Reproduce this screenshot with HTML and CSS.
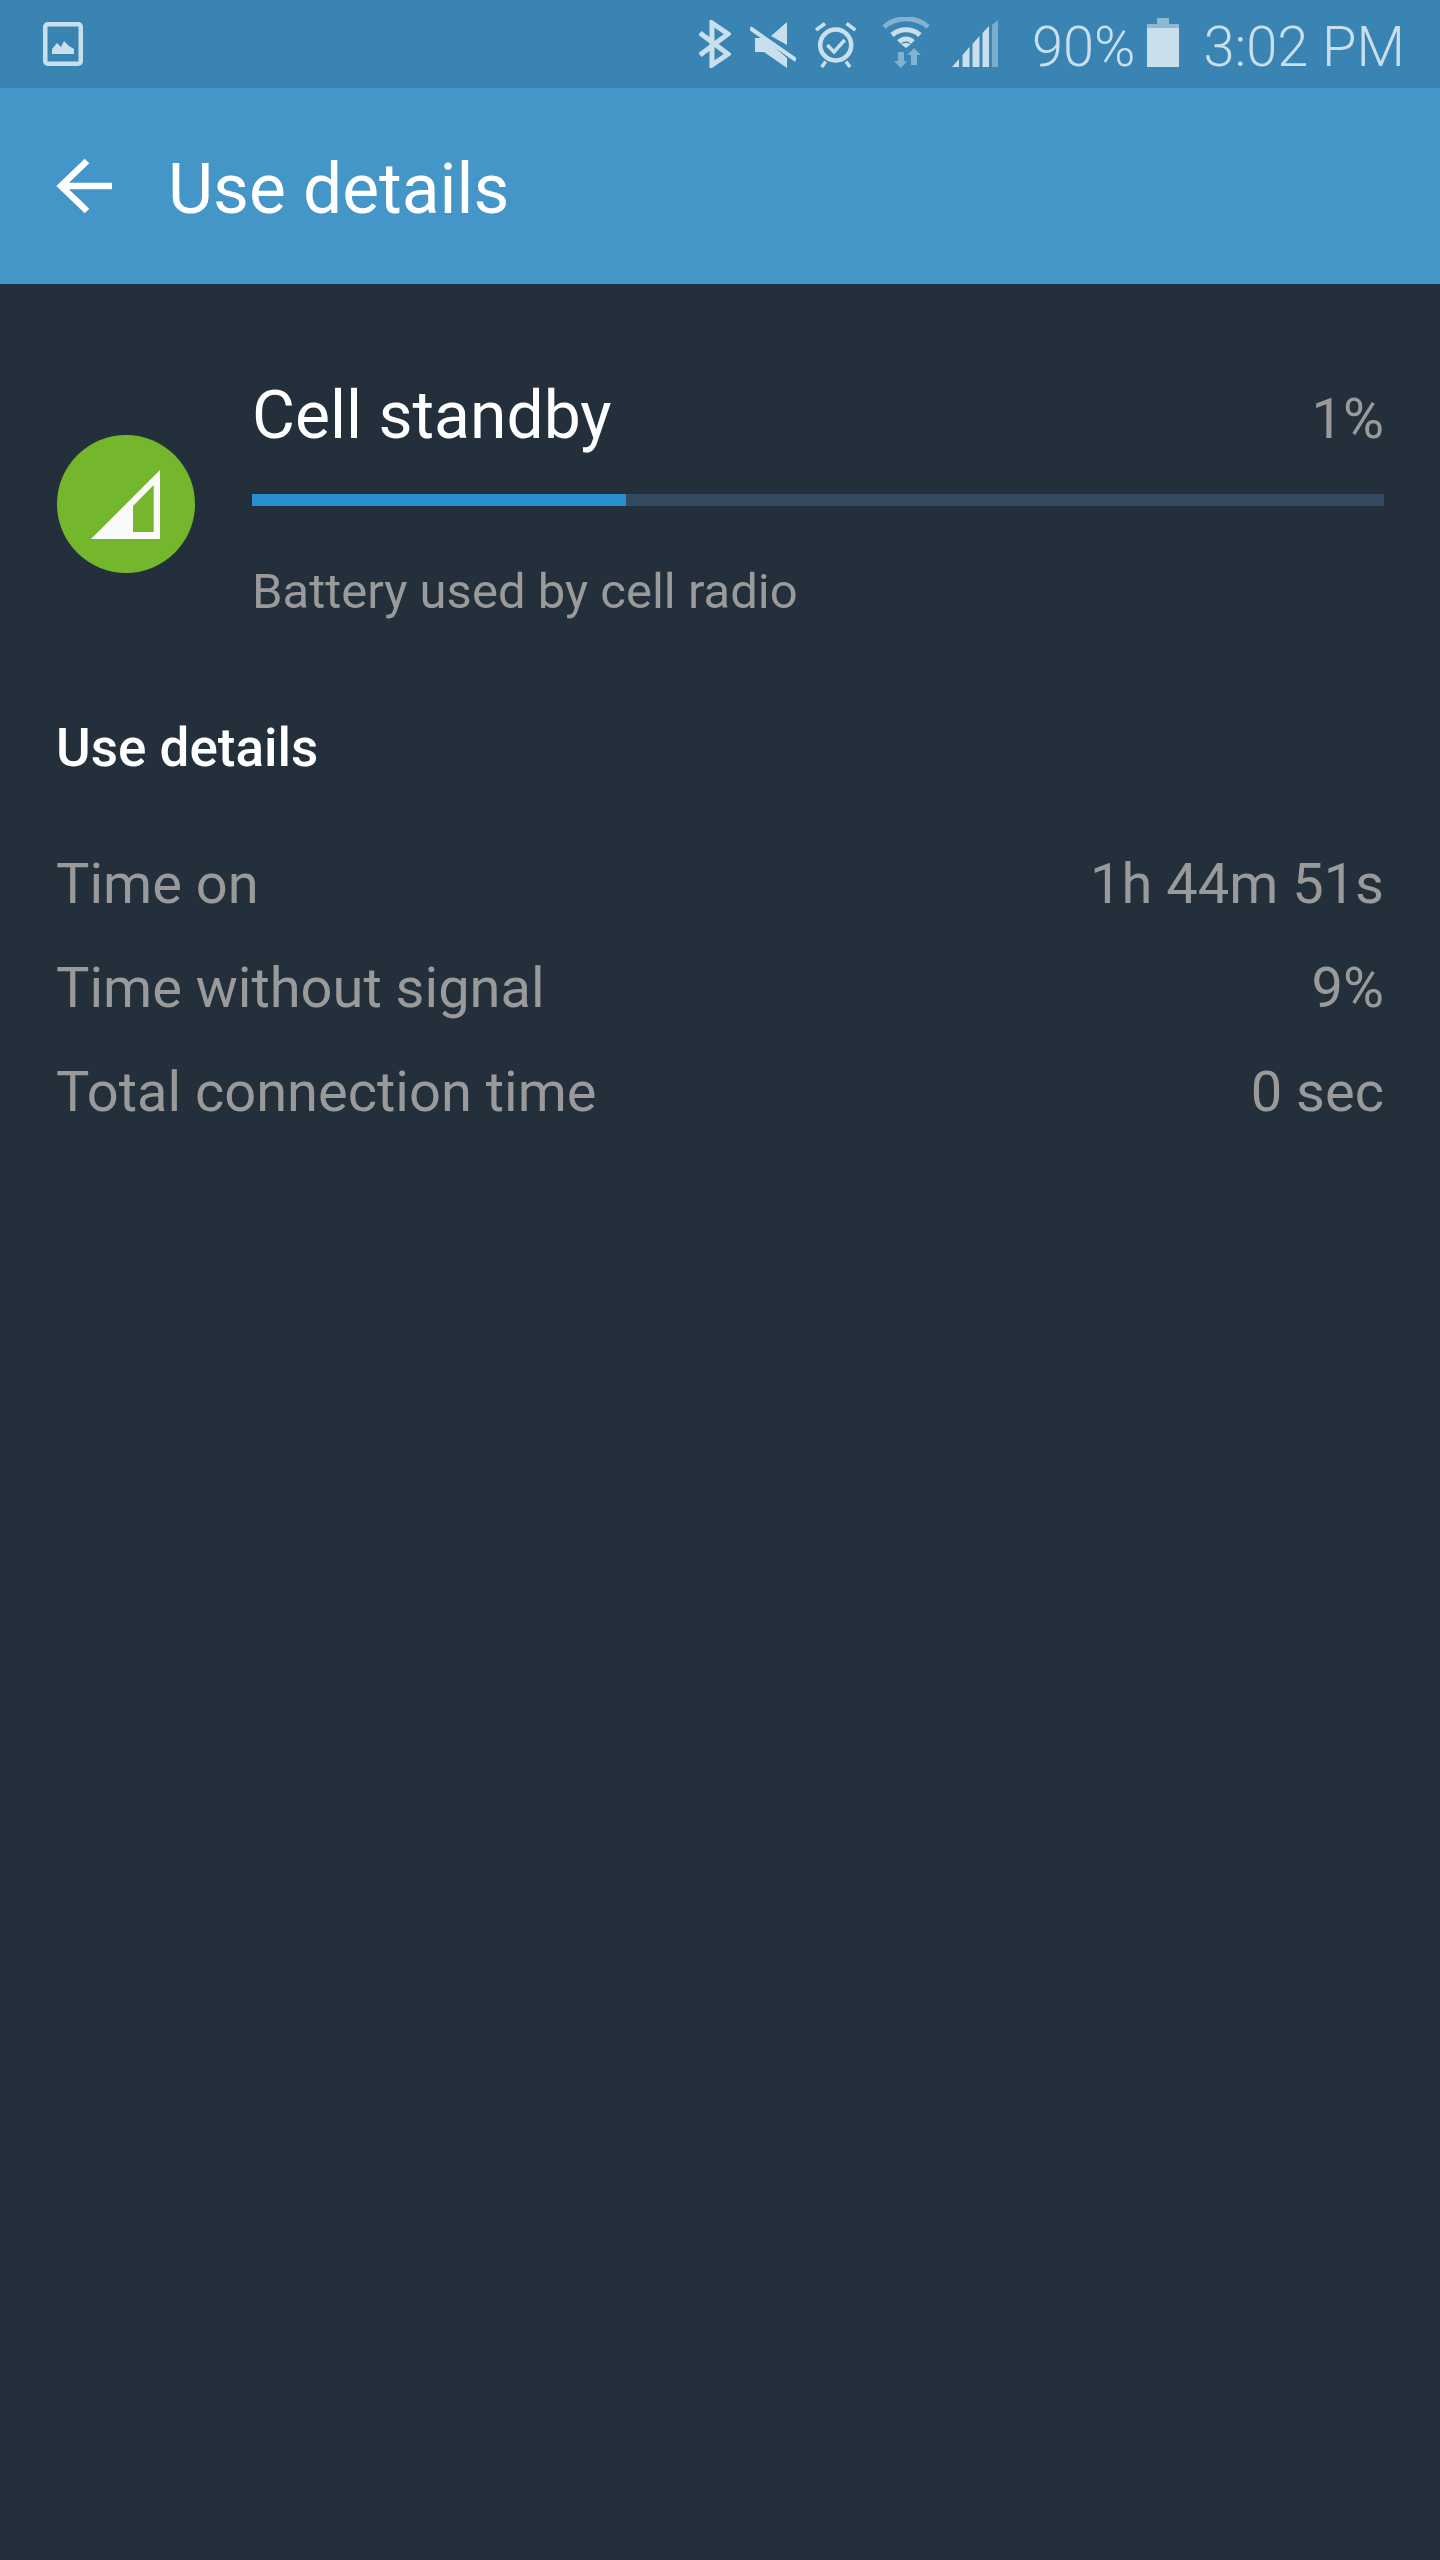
FILE: index.html
```html
<!DOCTYPE html>
<html lang="en">

<head>
    <meta charset="UTF-8">
    <title>Use details</title>
    <link rel="stylesheet" href="styles.css">
</head>

<body>
    <!-- Status bar -->
    <div class="status-bar">
        <svg class="icon-picture" width="40" height="44" viewBox="0 0 40 44">
            <rect x="2.250" y="2.250" width="35.500" height="39.500" rx="2.500" fill="none" stroke="#c9dfec" stroke-width="4.500" />
            <path d="M9 32V27L14 21L18 25L21 19L26 24L31 27V32Z" fill="#c9dfec" />
        </svg>
        <div class="status-right">
            <svg class="icon-bluetooth" width="34" height="48" viewBox="0 0 34 48">
                <path d="M3 13L31 34L15 45V3L31 14L3 35" fill="none" stroke="#c9dfec" stroke-width="5" />
            </svg>
            <svg class="icon-mute" width="46" height="47" viewBox="0 0 46 47">
                <path d="M37 1V24L21 15Z M5 17H14L37 37V47L14 31H5Z" fill="#c9dfec" />
                <path d="M0 4L46 37" fill="none" stroke="#3a84b3" stroke-width="5" />
                <path d="M0 7L46 39" fill="none" stroke="#c9dfec" stroke-width="4" />
            </svg>
            <svg class="icon-alarm" width="41" height="46" viewBox="0 0 41 46">
                <circle cx="20.700" cy="23" r="15.500" fill="none" stroke="#c9dfec" stroke-width="4.500" />
                <path d="M12.300 23L19 30L29.700 18M1 8L10 1.500M40.500 8L31.500 1.500M10.700 39.500L6.700 45M31 39.500L35 45" fill="none" stroke="#c9dfec" stroke-width="3.500" />
            </svg>
            <svg class="icon-wifi" width="48" height="51" viewBox="0 0 48 51">
                <path d="M2 10C14 -1 34 -1 46 10" fill="none" stroke="#c9dfec" stroke-opacity="0.5" stroke-width="5" />
                <path d="M10 18C18 11 30 11 38 18M17 25C21 21 27 21 31 25" fill="none" stroke="#c9dfec" stroke-width="5" />
                <path d="M24 31L19 27C22 25.500 26 25.500 29 27Z" fill="#c9dfec" />
                <path d="M16 35H22V44H25L19 51L12 44H16Z M29 48H35V38H39L32 31L25 38H29Z" fill="#c9dfec" fill-opacity="0.5" />
            </svg>
            <svg class="icon-signal" width="46" height="47" viewBox="0 0 46 47">
                <path d="M0 47L7 39V47Z M10.500 35L17.500 27V47H10.500Z M20.500 24L27.500 16V47H20.500Z M30.500 13L37 6V47H30.500Z" fill="#c9dfec" />
                <path d="M40 5L46 0V47H40Z" fill="#c9dfec" fill-opacity="0.45" />
            </svg>
            <span class="status-percent">90%</span>
            <svg class="icon-battery" width="32" height="49" viewBox="0 0 32 49">
                <path d="M0 10H32V49H0Z" fill="#c9dfec" />
                <path d="M10 0H22V6H32V10H0V6H10Z" fill="#8db9d4" />
            </svg>
            <span class="status-time">3:02 PM</span>
        </div>
    </div>

    <!-- App bar -->
    <div class="app-bar">
        <svg class="back-arrow" width="56" height="56" viewBox="0 0 56 56">
            <path d="M56 28H5M31 3L5 28L31 53" fill="none" stroke="#ffffff" stroke-width="6.500" />
        </svg>
        <h1>Use details</h1>
    </div>

    <!-- Summary -->
    <div class="summary">
        <svg class="cell-icon" width="138" height="138" viewBox="0 0 138 138">
            <circle cx="69" cy="69" r="69" fill="#74b62c" />
            <path d="M34 104H103V35Z M76 71L96.700 50V97H76Z" fill="#fafafa" fill-rule="evenodd" />
        </svg>
        <div class="summary-text">
            <div class="summary-title">
                <span class="cell-name">Cell standby</span>
                <span class="cell-percent">1%</span>
            </div>
            <div class="progress">
                <div class="progress-fill"></div>
            </div>
            <div class="summary-sub">Battery used by cell radio</div>
        </div>
    </div>

    <!-- Use details -->
    <div class="details">
        <h2>Use details</h2>
        <div class="row"><span>Time on</span><span>1h 44m 51s</span></div>
        <div class="row"><span>Time without signal</span><span>9%</span></div>
        <div class="row"><span>Total connection time</span><span>0 sec</span></div>
    </div>
</body>

</html>
```

FILE: styles.css
```css
/* General */
body {
    margin: 0;
    min-height: 2560px;
    background-color: #23303c;
    font-family: Roboto, "Liberation Sans", sans-serif;
}

/* Status bar */
.status-bar {
    display: flex;
    justify-content: space-between;
    height: 88px;
    padding: 0 35px 0 43px;
    background-color: #3a84b3;
    color: #c9dfec;
}

.icon-picture {
    margin-top: 22px;
}

.status-right {
    display: flex;
}

.status-right svg {
    flex-shrink: 0;
}

.icon-bluetooth {
    margin-top: 20px;
}

.icon-mute {
    margin: 21px 0 0 19px;
}

.icon-alarm {
    margin: 22px 0 0 19px;
}

.icon-wifi {
    margin: 17px 0 0 26px;
}

.icon-signal {
    margin: 20px 0 0 22px;
}

.status-percent,
.status-time {
    margin-top: 3px;
    font-size: 56px;
    font-weight: 300;
    line-height: 88px;
}

.status-percent {
    margin-left: 34px;
}

.icon-battery {
    margin: 18px 0 0 12px;
}

.status-time {
    margin-left: 24px;
}

/* App bar */
.app-bar {
    display: flex;
    align-items: center;
    height: 196px;
    padding-left: 56px;
    background-color: #4596c8;
}

.app-bar h1 {
    margin: 6px 0 0 56px;
    font-size: 69.500px;
    font-weight: 400;
    color: #ffffff;
}

/* Summary */
.summary {
    display: flex;
    align-items: center;
    padding: 92px 56px 0 57px;
}

.cell-icon {
    flex-shrink: 0;
    margin-top: 9px;
}

.summary-text {
    flex-grow: 1;
    margin-left: 57px;
}

.summary-title {
    display: flex;
    justify-content: space-between;
    align-items: baseline;
    line-height: 80px;
}

.cell-name {
    font-size: 66px;
    color: #ffffff;
}

.cell-percent {
    font-size: 56px;
    color: #9a9a9a;
}

.progress {
    height: 12px;
    margin-top: 35px;
    background-color: #344a60;
}

.progress-fill {
    width: 33%;
    height: 100%;
    background-color: #2a90d0;
}

.summary-sub {
    margin-top: 56px;
    font-size: 49px;
    line-height: 60px;
    color: #9a9a9a;
}

/* Use details */
.details {
    padding: 94px 56px 0;
}

.details h2 {
    margin: 0 0 52px;
    font-size: 53px;
    font-weight: 500;
    line-height: 64px;
    color: #ffffff;
}

.row {
    display: flex;
    justify-content: space-between;
    font-size: 56px;
    line-height: 104px;
    color: #9a9a9a;
}
```
